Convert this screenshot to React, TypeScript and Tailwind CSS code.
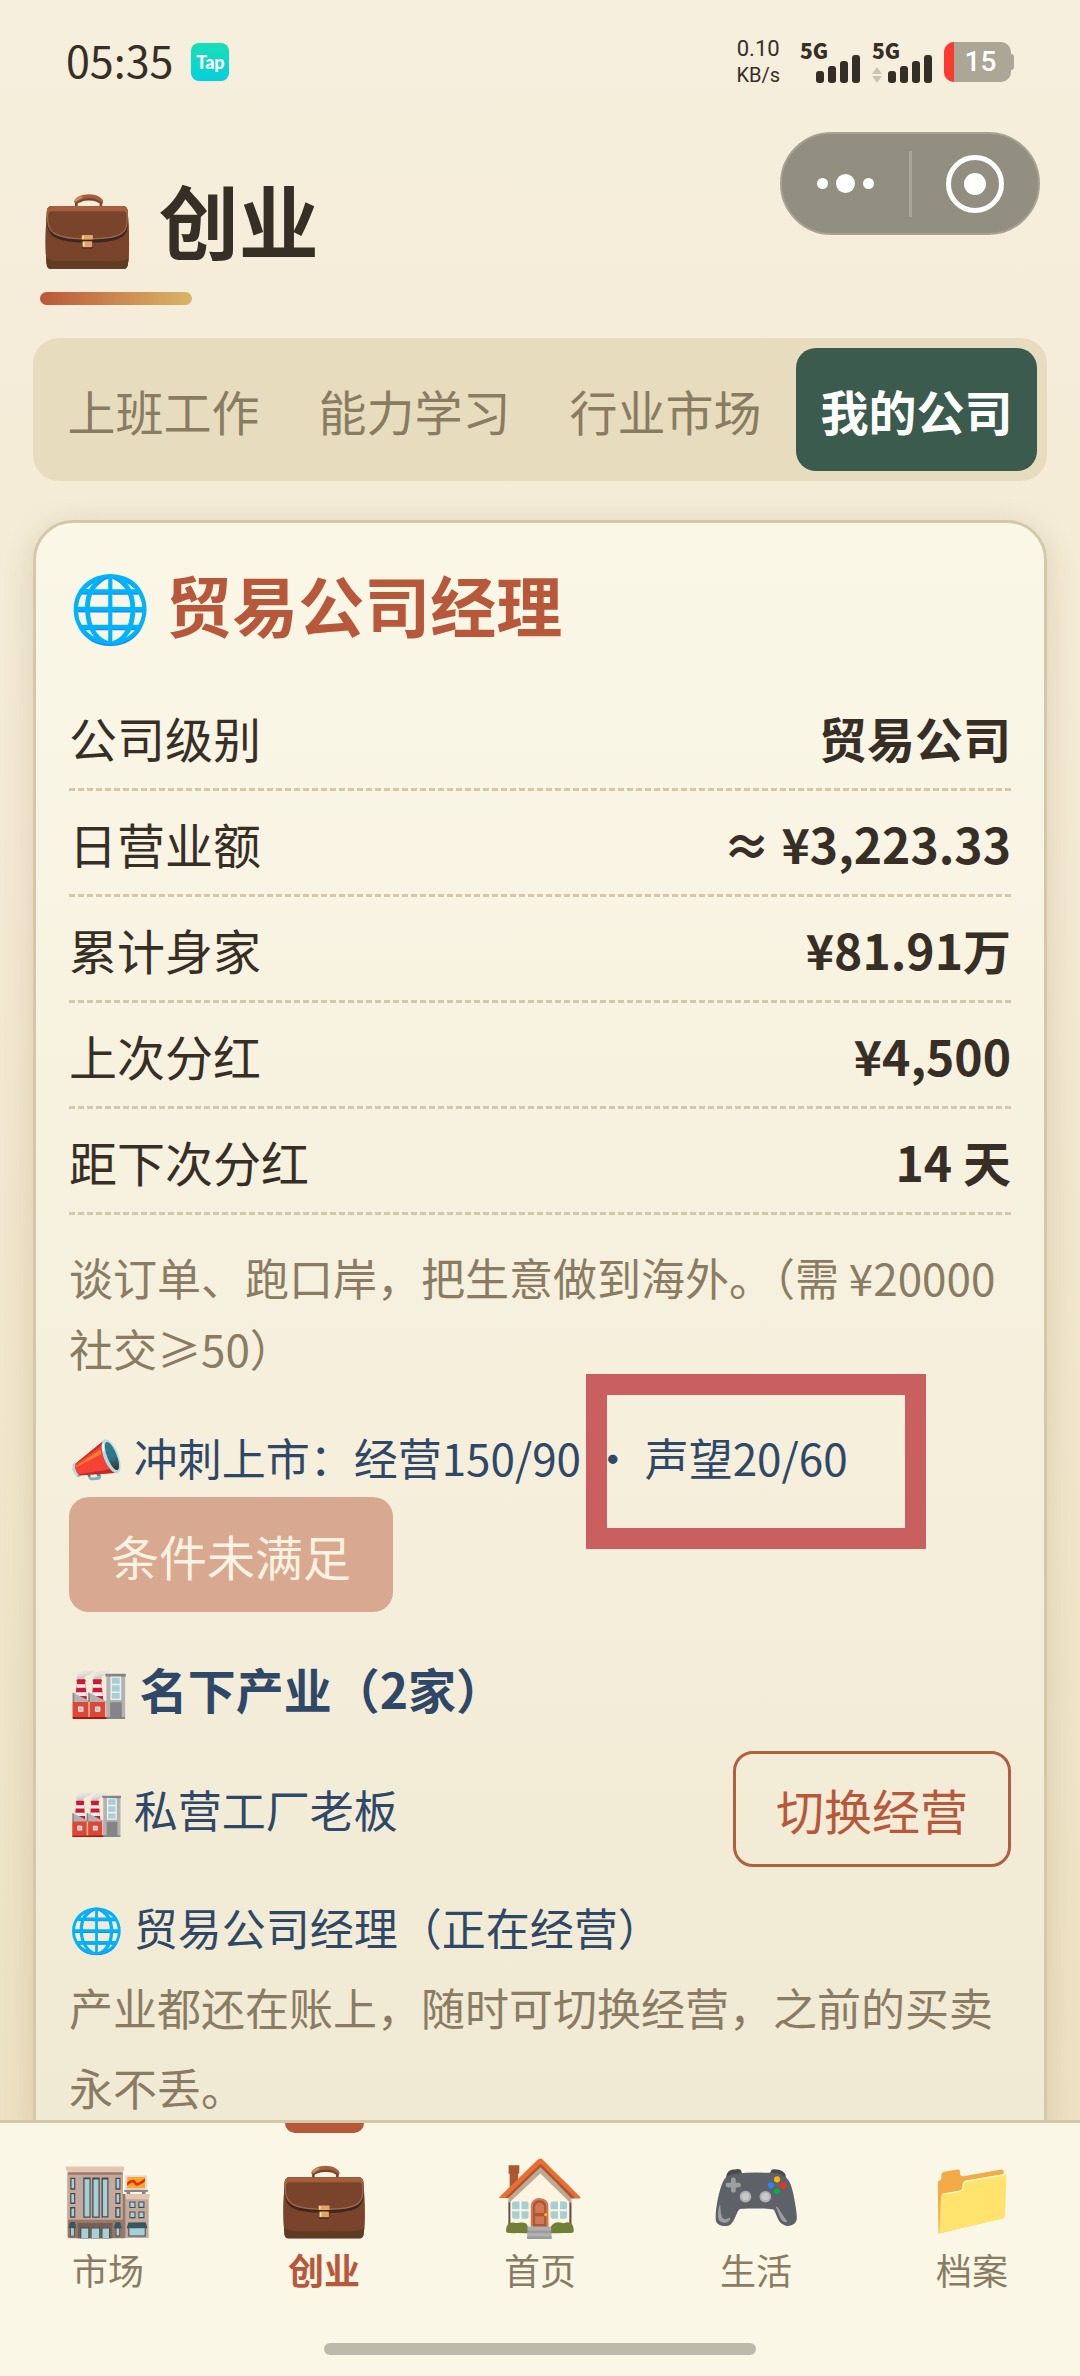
import { useState } from "react";

const tabs = ["上班工作", "能力学习", "行业市场", "我的公司"];

const stats = [
  { label: "公司级别", value: "贸易公司" },
  { label: "日营业额", value: "≈ ¥3,223.33" },
  { label: "累计身家", value: "¥81.91万" },
  { label: "上次分红", value: "¥4,500" },
  { label: "距下次分红", value: "14 天" },
];

const navItems = [
  { icon: "🏬", label: "市场" },
  { icon: "💼", label: "创业" },
  { icon: "🏠", label: "首页" },
  { icon: "🎮", label: "生活" },
  { icon: "📁", label: "档案" },
];

const SignalBars = () => (
  <svg viewBox="0 0 44 28" className="h-[28px] w-[44px]" fill="#332e26">
    <rect x="0" y="16" width="8" height="12" rx="3" />
    <rect x="12" y="11" width="8" height="17" rx="3" />
    <rect x="24" y="6" width="8" height="22" rx="3" />
    <rect x="36" y="0" width="8" height="28" rx="3" />
  </svg>
);

const StatusBar = () => (
  <div className="flex h-[124px] shrink-0 items-center justify-between px-[66px]">
    <div className="flex items-center gap-[18px]">
      <span className="pb-[6px] text-[43px] leading-[42px]">05:35</span>
      <span className="flex size-[38px] items-center justify-center rounded-lg bg-linear-to-b from-[#19dfb4] to-[#06cfdc] font-[Lato] text-[18px] leading-none font-black text-white">
        Tap
      </span>
    </div>
    <div className="flex h-[42px] items-stretch">
      <div className="mr-5 flex flex-col self-center text-center font-[Roboto] text-[22px] leading-[26px]">
        <span>0.10</span>
        <span className="text-[20px]">KB/s</span>
      </div>
      <div className="relative flex w-[60px] items-end justify-end">
        <span className="absolute top-0 left-0 text-[21px] leading-[18px] font-black">5G</span>
        <SignalBars />
      </div>
      <div className="relative ml-3 flex w-[60px] items-end justify-between">
        <span className="absolute top-0 left-0 text-[21px] leading-[18px] font-black">5G</span>
        <svg viewBox="0 0 10 16" className="h-[16px] w-[10px]" fill="#cbc4b2">
          <path d="M5 0L10 7H0ZM5 16L0 9H10Z" />
        </svg>
        <SignalBars />
      </div>
      <div className="ml-3 flex items-center">
        <div className="flex h-[40px] w-[67px] items-center overflow-hidden rounded-[10px] bg-[#aca697]">
          <span className="h-full w-[10px] bg-[#fb3b2d]" />
          <span className="flex-1 pr-1 text-center font-[Roboto] text-[28px] leading-[36px] font-medium text-white">15</span>
        </div>
        <span className="h-4 w-[3px] rounded-r bg-[#aca697]" />
      </div>
    </div>
  </div>
);

const Capsule = () => (
  <div className="flex h-[103px] w-[260px] items-center rounded-full border-2 border-[#a7a294] bg-[#928e80]">
    <button aria-label="更多" className="flex flex-1 items-center justify-center gap-2">
      <span className="size-[11px] rounded-full bg-white" />
      <span className="size-[19px] rounded-full bg-white" />
      <span className="size-[11px] rounded-full bg-white" />
    </button>
    <span className="h-[66px] w-[3px] bg-[#aaa598]" />
    <button aria-label="关闭" className="flex flex-1 items-center justify-center">
      <span className="flex size-[58px] items-center justify-center rounded-full border-5 border-white">
        <span className="size-[22px] rounded-full bg-white" />
      </span>
    </button>
  </div>
);

export default function App() {
  const [tab, setTab] = useState("我的公司");
  const [page, setPage] = useState("创业");

  return (
    <div
      lang="zh-CN"
      className="flex h-screen flex-col overflow-hidden bg-linear-to-b from-[#f6efdd] to-[#ede0c0] font-['Noto_Sans_CJK_SC','Noto_Color_Emoji',sans-serif] text-[#372e25]"
    >
      <StatusBar />

      <header className="flex shrink-0 items-start justify-between pt-2 pr-10 pl-10">
        <div className="pt-[30px]">
          <h1 className="flex items-baseline gap-6 leading-[112px] font-bold">
            <span className="text-[76px]">💼</span>
            <span className="text-[80px]">创业</span>
          </h1>
          <div className="mt-4 h-[13px] w-[152px] rounded-full bg-linear-to-r from-[#b9583a] to-[#d9b567]" />
        </div>
        <Capsule />
      </header>

      <main className="min-h-0 flex-1 overflow-y-auto px-[33px] pt-[33px] [scrollbar-width:none]">
        <div role="tablist" className="grid grid-cols-4 gap-[10px] rounded-[26px] bg-[#e7dcbd] p-[10px]">
          {tabs.map((name) => (
            <button
              key={name}
              role="tab"
              aria-selected={tab === name}
              onClick={() => setTab(name)}
              className={`h-[123px] rounded-[20px] text-[48px] leading-[72px] whitespace-nowrap ${
                tab === name ? "bg-[#3b5b4f] font-bold text-white" : "text-[#8a7c62]"
              }`}
            >
              {name}
            </button>
          ))}
        </div>

        <section className="mt-[39px] rounded-[40px] border-3 border-[#d3c8a8] bg-linear-to-b from-[#fbf7e7] to-[#f0e9d3] p-[33px] shadow-[0_6px_30px_rgba(110,85,40,0.18)]">
          <h2 className="mb-[34px] text-[66px] leading-[95px] font-bold text-[#b8583a]">🌐 贸易公司经理</h2>

          <dl>
            {stats.map((item) => (
              <div
                key={item.label}
                className="flex h-[106px] items-center justify-between border-b-3 border-dashed border-[#d3c8a8] text-[48px] leading-[72px]"
              >
                <dt>{item.label}</dt>
                <dd className="font-bold">{item.value}</dd>
              </div>
            ))}
          </dl>

          <p className="mt-[27px] text-[44px] leading-[71px] text-[#8a7c62]">
            谈订单、跑口岸，把生意做到海外。（需 ¥20000 社交≥50）
          </p>

          <p className="relative mt-[33px] text-[44px] leading-[80px] whitespace-nowrap text-[#2f4868]">
            📣 冲刺上市：经营150/90 · 声望20/60
            <span className="absolute top-[-43px] left-[517px] h-[175px] w-[340px] border-[21px] border-[#c95f5f]" />
          </p>
          <button disabled className="block h-[115px] rounded-[20px] bg-[#d8a890] px-[42px] text-[48px] leading-[72px] text-[#fbf3e2]">
            条件未满足
          </button>

          <h3 className="mt-[33px] text-[48px] leading-[86px] font-bold text-[#2f4868]">🏭 名下产业（2家）</h3>
          <div className="my-5 flex items-center justify-between text-[44px] leading-[80px] text-[#2f4868]">
            <span>🏭 私营工厂老板</span>
            <button className="h-[116px] rounded-[20px] border-3 border-[#b0603f] px-10 text-[48px] leading-[72px] text-[#b8583a]">
              切换经营
            </button>
          </div>
          <p className="text-[44px] leading-[80px] text-[#2f4868]">🌐 贸易公司经理（正在经营）</p>
          <p className="text-[44px] leading-[80px] text-[#8a7c62]">
            产业都还在账上，随时可切换经营，之前的买卖永不丢。
          </p>
        </section>
      </main>

      <nav className="shrink-0 border-t-3 border-[#d3c8a8] bg-[#fbf7e7]">
        <div className="grid grid-cols-5">
          {navItems.map((item) => (
            <button
              key={item.label}
              onClick={() => setPage(item.label)}
              className={`relative flex flex-col items-center gap-1 pt-5 ${
                page === item.label ? "font-bold text-[#b8583a]" : "text-[#8a7c62]"
              }`}
            >
              {page === item.label && <span className="absolute top-0 h-[10px] w-[79px] rounded-b-[10px] bg-[#b8583a]" />}
              <span className="text-[74px] leading-[96px]">{item.icon}</span>
              <span className="text-[36px] leading-[52px]">{item.label}</span>
            </button>
          ))}
        </div>
        <div className="mx-auto mt-[48px] mb-[21px] h-3 w-2/5 rounded-full bg-[#bdbaad]" />
      </nav>
    </div>
  );
}
